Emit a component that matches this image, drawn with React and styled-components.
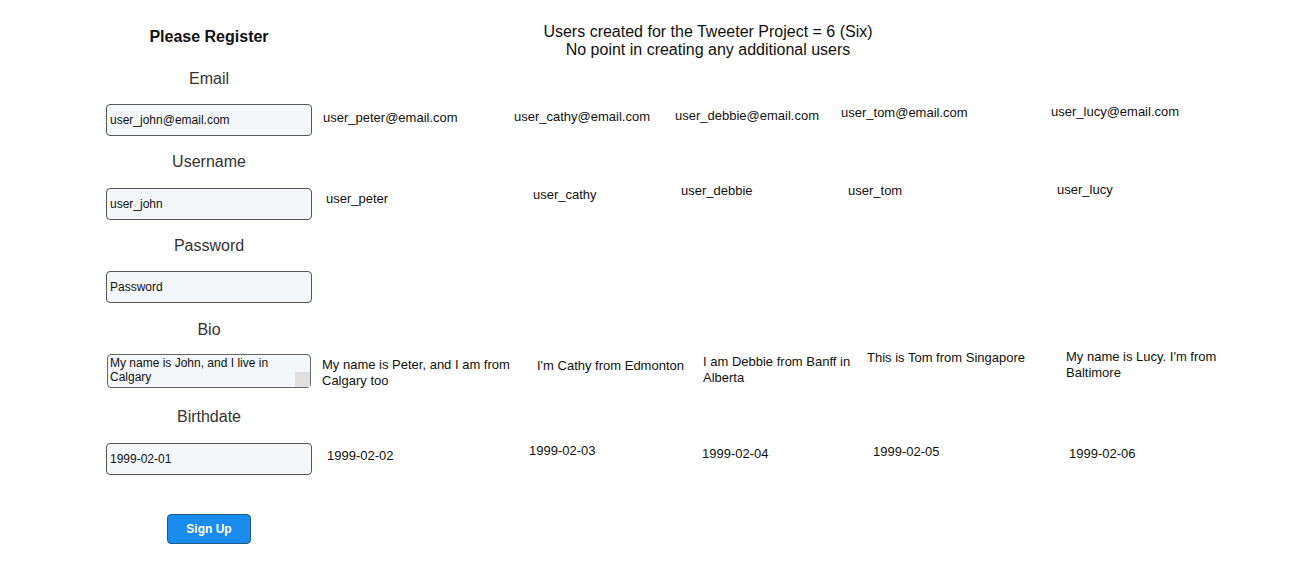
import styled, { createGlobalStyle } from 'styled-components';

const users = [
  {
    name: 'peter',
    width: 198,
    bioWidth: 200,
    email: ['user_peter@email.com', 11, 6],
    username: ['user_peter', 14, 3],
    bio: ['My name is Peter, and I am from Calgary too', 10, 3],
    birthdate: ['1999-02-02', 15, 5],
  },
  {
    name: 'cathy',
    width: 160,
    bioWidth: 160,
    email: ['user_cathy@email.com', 4, 5],
    username: ['user_cathy', 23, -1],
    bio: ["I'm Cathy from Edmonton", 27, 4],
    birthdate: ['1999-02-03', 19, 0],
  },
  {
    name: 'debbie',
    width: 166,
    bioWidth: 155,
    email: ['user_debbie@email.com', 5, 4],
    username: ['user_debbie', 11, -5],
    bio: ['I am Debbie from Banff in Alberta', 33, 0],
    birthdate: ['1999-02-04', 32, 3],
  },
  {
    name: 'tom',
    width: 210,
    bioWidth: 180,
    email: ['user_tom@email.com', 5, 1],
    username: ['user_tom', 12, -5],
    bio: ['This is Tom from Singapore', 31, -4],
    birthdate: ['1999-02-05', 37, 1],
  },
  {
    name: 'lucy',
    width: 200,
    bioWidth: 165,
    email: ['user_lucy@email.com', 5, 0],
    username: ['user_lucy', 11, -6],
    bio: ["My name is Lucy. I'm from Baltimore", 20, -5],
    birthdate: ['1999-02-06', 23, 3],
  },
];

// shift nudges the label text up (-) or down (+) inside its row, in px
const fields = [
  { key: 'email', label: 'Email', value: 'user_john@email.com', labelRow: 49, shift: -1 },
  { key: 'username', label: 'Username', value: 'user_john', labelRow: 52, shift: 0 },
  { key: 'password', label: 'Password', placeholder: 'Password', labelRow: 51, shift: 0 },
  { key: 'bio', label: 'Bio', value: 'My name is John, and I live in Calgary', labelRow: 51, shift: 1, area: true },
  { key: 'birthdate', label: 'Birthdate', value: '1999-02-01', labelRow: 54, shift: 1 },
];

export default function App() {
  return (
    <>
      <GlobalStyle />
      <Board $cols={users.map((u) => u.width)}>
        <Heading>Please Register</Heading>
        <Title>
          Users created for the Tweeter Project = 6 (Six)
          <br />
          No point in creating any additional users
        </Title>

        {fields.map((f) => (
          <FieldGroup key={f.key} f={f} />
        ))}

        <SignUp type='button'>Sign Up</SignUp>
      </Board>
    </>
  );
}

const FieldGroup = ({ f }) => (
  <>
    <Label $h={f.labelRow} $shift={f.shift}>
      {f.label}
    </Label>
    <LabelFill $h={f.labelRow} />
    {f.area ? (
      <BioInput rows={2} defaultValue={f.value} />
    ) : (
      <TextInput defaultValue={f.value} placeholder={f.placeholder} />
    )}
    {users.map((u) => {
      const cell = u[f.key];
      return cell ? (
        <Value key={u.name} $dx={cell[1]} $dy={cell[2]} $w={f.area ? u.bioWidth : null}>
          {cell[0]}
        </Value>
      ) : (
        <Empty key={u.name} />
      );
    })}
  </>
);

const GlobalStyle = createGlobalStyle`
  body {
    margin: 0;
    background: #fff;
    font-family: 'Liberation Sans', Arial, sans-serif;
    color: #111;
  }
`;

const Board = styled.div`
  display: grid;
  grid-template-columns: 206px ${(p) => p.$cols.map((c) => `${c}px`).join(' ')};
  grid-template-rows: 33px;
  grid-auto-rows: auto;
  align-items: start;
  padding: 22px 0 0 106px;
`;

const Heading = styled.h1`
  margin: 6px 0 0;
  font-size: 16px;
  line-height: 18px;
  font-weight: 700;
  text-align: center;
  color: #111;
`;

const Title = styled.div`
  grid-column: 2 / -1;
  margin-top: 1px;
  padding-right: 142px;
  font-size: 16px;
  line-height: 18px;
  text-align: center;
  color: #111;
`;

const Label = styled.label`
  grid-column: 1;
  box-sizing: border-box;
  height: ${(p) => p.$h}px;
  padding-top: ${(p) => Math.max(p.$shift, 0) * 2}px;
  padding-bottom: ${(p) => Math.max(-p.$shift, 0) * 2}px;
  display: flex;
  align-items: center;
  justify-content: center;
  font-size: 16px;
  color: #333;
`;

const LabelFill = styled.div`
  grid-column: 2 / -1;
  height: ${(p) => p.$h}px;
`;

const inputBase = `
  box-sizing: border-box;
  width: 206px;
  margin: 0;
  border: 1px solid #555;
  border-radius: 4px;
  background: #f4f7fa;
  font-family: 'Liberation Sans', Arial, sans-serif;
  font-size: 12px;
  color: #111;
  outline: none;
`;

const TextInput = styled.input`
  ${inputBase}
  grid-column: 1;
  height: 32px;
  padding: 0 3px;

  &::placeholder {
    color: #111;
    opacity: 1;
  }
`;

const BioInput = styled.textarea`
  ${inputBase}
  grid-column: 1;
  justify-self: center;
  width: 204px;
  height: 34px;
  padding: 1px 2px;
  line-height: 14px;
  resize: vertical;
  overflow-y: scroll;
  border-color: #666;

  &::-webkit-scrollbar {
    width: 15px;
    background: #f0f0f0;
  }
  &::-webkit-scrollbar-thumb {
    background: #e4e4e4;
    border: 5px solid #f0f0f0;
  }
  &::-webkit-resizer {
    background: #e0e0e0;
  }
`;

const Value = styled.div`
  margin: ${(p) => p.$dy}px 0 0 ${(p) => p.$dx}px;
  width: ${(p) => (p.$w ? `${p.$w}px` : 'auto')};
  font-size: 13px;
  line-height: 16px;
  white-space: ${(p) => (p.$w ? 'normal' : 'nowrap')};
  color: #111;
`;

const Empty = styled.div``;

const SignUp = styled.button`
  grid-column: 1;
  justify-self: center;
  margin-top: 39px;
  width: 84px;
  height: 30px;
  border: 1px solid #1c5a94;
  border-radius: 4px;
  background: #1a8cf0;
  color: #fff;
  font-family: 'Liberation Sans', Arial, sans-serif;
  font-size: 12px;
  font-weight: 700;
  cursor: pointer;
`;
